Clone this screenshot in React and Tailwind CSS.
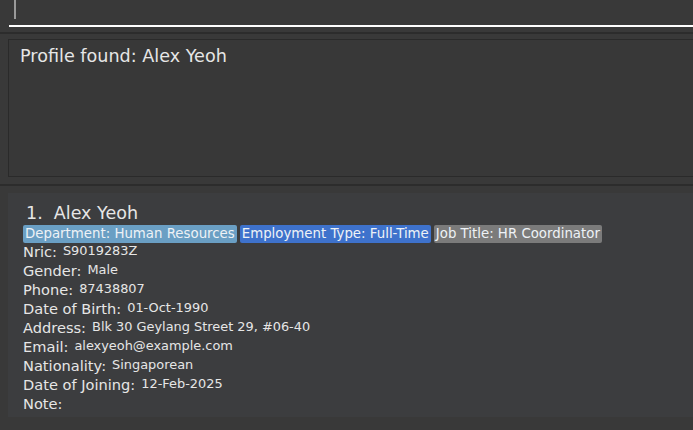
import React from "react";

const person = {
  name: "Alex Yeoh",
  tags: [
    { text: "Department: Human Resources", cls: "bg-[#6a9fc4]" },
    { text: "Employment Type: Full-Time", cls: "bg-[#3e72cc]" },
    { text: "Job Title: HR Coordinator", cls: "bg-[#7b7b7b]" },
  ],
  fields: [
    ["Nric:", "S9019283Z"],
    ["Gender:", "Male"],
    ["Phone:", "87438807"],
    ["Date of Birth:", "01-Oct-1990"],
    ["Address:", "Blk 30 Geylang Street 29, #06-40"],
    ["Email:", "alexyeoh@example.com"],
    ["Nationality:", "Singaporean"],
    ["Date of Joining:", "12-Feb-2025"],
    ["Note:", ""],
  ],
};

const App = () => {
  return (
    <div className="w-[693px] h-[430px] bg-[#393939] overflow-hidden font-['DejaVu_Sans',sans-serif] text-[#e6e6e6]">
      {/* command box */}
      <div className="h-[27px] pl-[9px]">
        <div className="h-full border-b-2 border-white pl-[5px]">
          <div className="w-[2px] h-[19px] bg-[#9a9a9a]" />
        </div>
      </div>
      <div className="h-[12px] flex flex-col justify-center">
        <div className="h-[2px] bg-[#2c2c2c]" />
      </div>

      {/* result display */}
      <div className="pl-[8px]">
        <div className="h-[138px] border border-r-0 border-[#2a2a2a] bg-[#383838] pl-[11px] pt-[4px]">
          <p className="text-[17.6px] leading-[24px]">Profile found: Alex Yeoh</p>
        </div>
      </div>
      <div className="h-[16px] flex flex-col justify-center">
        <div className="h-[2px] bg-[#2c2c2c]" />
      </div>

      {/* person list */}
      <div className="pl-[8px]">
        <div className="h-[224px] bg-[#3c3d3f] pl-[15px] pt-[8px]">
          <p className="text-[17.5px] leading-[24px] pl-[3px]">
            1.&nbsp;&nbsp;{person.name}
          </p>
          <div className="flex gap-[3px]">
            {person.tags.map((t) => (
              <span
                key={t.text}
                className={`${t.cls} text-[13.33px] leading-[18px] px-[2px] rounded-[2px] text-[#eef2f6]`}
              >
                {t.text}
              </span>
            ))}
          </div>
          <div className="-mt-[1px]">
            {person.fields.map(([label, value]) => (
              <div key={label} className="flex items-start h-[19px]">
                <span className="text-[14.6px] leading-[20px]">{label}</span>
                <span className="text-[12.9px] leading-[16px] ml-[6px] mt-[1px]">{value}</span>
              </div>
            ))}
          </div>
        </div>
      </div>
    </div>
  );
};

export default App;
